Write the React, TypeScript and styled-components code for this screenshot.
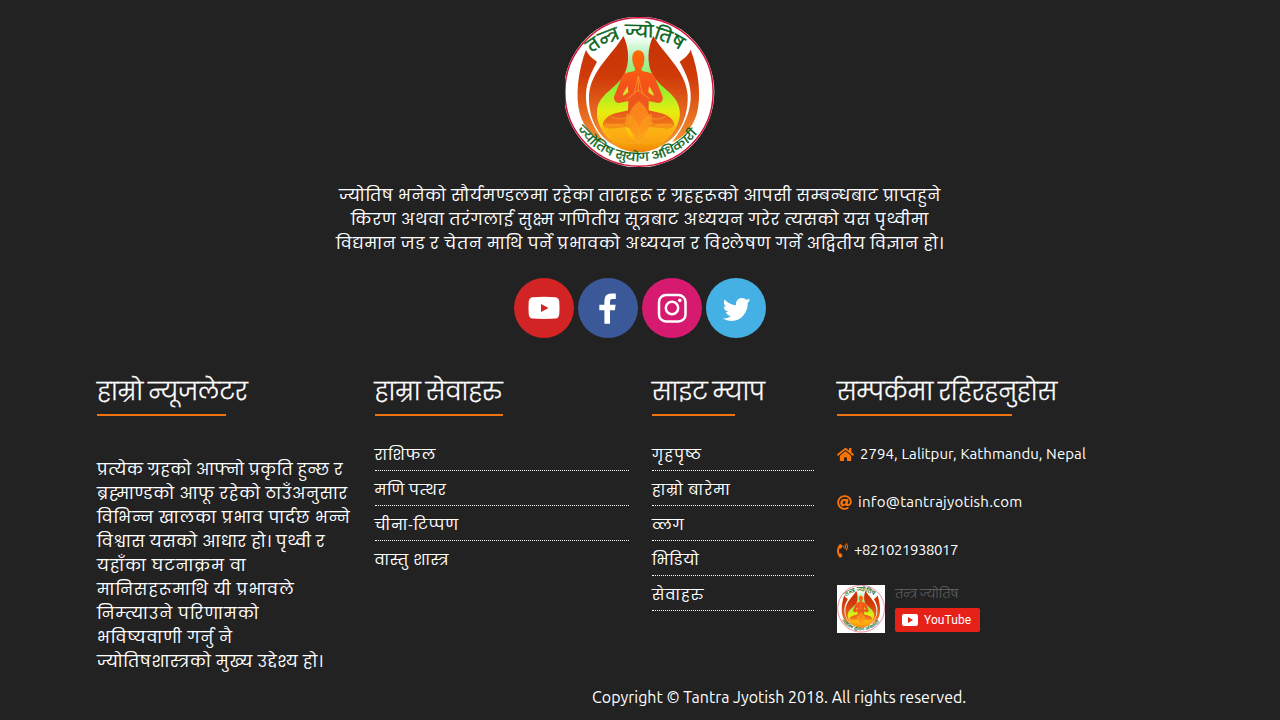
import React from "react";
import styled, { createGlobalStyle } from "styled-components";
import { FaHome, FaAt, FaPhoneVolume } from "react-icons/fa";

const GlobalStyle = createGlobalStyle`
  * { box-sizing: border-box; }
  body {
    margin: 0;
    background: #222;
    color: #fff;
    font-family: Ubuntu, Poppins, "Noto Sans", sans-serif;
    overflow: hidden;
  }
`;

const Footer = styled.footer`
  height: 720px;
  display: flex;
  flex-direction: column;
  align-items: center;
  padding-top: 17px;
  overflow: hidden;
`;

const Intro = styled.div`
  margin-top: 16px;
  display: flex;
  flex-direction: column;
  align-items: center;
`;

const Line = styled.span<{ $spacing: number }>`
  display: block;
  height: 24px;
  line-height: 24px;
  white-space: nowrap;
  font-size: 16px;
  letter-spacing: ${(p) => p.$spacing}px;
`;

const Socials = styled.div`
  display: flex;
  gap: 4px;
  margin-top: 23px;
`;

const Social = styled.a<{ $color: string }>`
  width: 60px;
  height: 60px;
  border-radius: 50%;
  background: ${(p) => p.$color};
  display: flex;
  align-items: center;
  justify-content: center;
  color: #fff;
`;

const Columns = styled.div`
  width: 1110px;
  height: 313px;
  margin-top: 34px;
  padding-left: 12px;
  display: grid;
  grid-template-columns: 277.5px 277.5px 185px 1fr;
`;

const Column = styled.section`
  padding-right: 23px;
  min-width: 0;
`;

const Heading = styled.h4<{ $bar: number }>`
  margin: 0;
  height: 44px;
  line-height: 40px;
  font-weight: 300;
  font-size: 24px;
  letter-spacing: -0.17px;
  white-space: nowrap;
  -webkit-text-stroke: 0.3px #fff;
  &::after {
    content: "";
    display: block;
    width: ${(p) => p.$bar}px;
    height: 2px;
    margin-top: 2px;
    background: #ee7410;
  }
`;

const About = styled.div`
  margin-top: 41px;
`;

const Links = styled.ul`
  list-style: none;
  margin: 20px 0 0;
  padding: 0;
`;

const LinkRow = styled.li<{ $plain?: boolean; $spacing: number }>`
  height: 35px;
  line-height: 38px;
  font-size: 15px;
  letter-spacing: ${(p) => p.$spacing}px;
  white-space: nowrap;
  border-bottom: ${(p) => (p.$plain ? "none" : "1px dotted #fff")};
`;

const Contact = styled.div<{ $spacing: number }>`
  height: 24px;
  margin-bottom: 24px;
  display: flex;
  align-items: center;
  gap: 6px;
  font-size: 15px;
  letter-spacing: ${(p) => p.$spacing}px;
  white-space: nowrap;
  svg { color: #f97306; flex: none; }
  span { margin-top: -2px; }
`;

const PhoneIcon = styled(FaPhoneVolume)`
  width: 11px;
`;

const Contacts = styled.div`
  margin-top: 26px;
`;

const Channel = styled.div`
  display: flex;
  gap: 10px;
  margin-top: -1px;
`;

const Avatar = styled.div`
  width: 48px;
  height: 48px;
  background: #fff;
`;

const ChannelName = styled.div`
  height: 23px;
  line-height: 18px;
  font-size: 12px;
  font-weight: 300;
  color: #666;
`;

const Subscribe = styled.button`
  display: flex;
  align-items: center;
  gap: 6px;
  width: 85px;
  height: 24px;
  padding: 0 7px;
  border: 0;
  border-radius: 2px;
  background: #e62117;
  color: #fff;
  font: 12px Roboto, sans-serif;
  letter-spacing: 0.1px;
`;

const Copyright = styled.div`
  width: 374px;
  margin-left: 278px;
  line-height: 24px;
  font-size: 16px;
  white-space: nowrap;
`;

function Petals() {
  return (
    <>
      <path fill="url(#flame)" d="M78 118C54 180 45 260 60 312C72 352 98 382 134 396C98 350 75 300 78 250C80 210 97 182 111 154C98 145 84 134 78 118Z" />
      <path fill="url(#flame)" d="M190 77C160 130 92 180 87 255C84 330 122 395 178 410C142 385 109 350 111 305C113 252 166 238 192 194C211 158 207 110 190 77Z" />
    </>
  );
}

function Emblem({ size, cropped }: { size: number; cropped?: boolean }) {
  return (
    <svg width={size} height={size} viewBox={cropped ? "15 20 450 450" : "8 20 456 456"}>
      <defs>
        <linearGradient id="flame" gradientUnits="userSpaceOnUse" x1="0" y1="80" x2="0" y2="410">
          <stop offset="0" stopColor="#c43205" />
          <stop offset="0.35" stopColor="#cf3a08" />
          <stop offset="0.7" stopColor="#e66a20" />
          <stop offset="1" stopColor="#f39a35" />
        </linearGradient>
        <linearGradient id="glow" gradientUnits="userSpaceOnUse" x1="0" y1="75" x2="0" y2="426">
          <stop offset="0" stopColor="#fff" />
          <stop offset="0.2" stopColor="#a5f0ae" />
          <stop offset="0.42" stopColor="#86ee32" />
          <stop offset="0.65" stopColor="#e5ee10" />
          <stop offset="0.84" stopColor="#ffc20a" />
          <stop offset="1" stopColor="#f08207" />
        </linearGradient>
        <linearGradient id="body" gradientUnits="userSpaceOnUse" x1="0" y1="120" x2="0" y2="390">
          <stop offset="0" stopColor="#ff6b05" />
          <stop offset="0.4" stopColor="#f4511c" />
          <stop offset="0.7" stopColor="#e85b1c" />
          <stop offset="1" stopColor="#f9a010" />
        </linearGradient>
        <path id="topArc" d="M94 129A222 222 0 0 1 372 129" />
        <path id="bottomArc" d="M48 352A226 226 0 0 0 424 352" />
      </defs>
      <circle cx="237" cy="245" r="226" fill="#fff" />
      <circle cx="237" cy="245" r="222.5" fill="none" stroke="#d0123a" strokeWidth="4.5" />
      <path fill="url(#glow)" d="M190 77C212 112 210 162 188 200C160 238 112 255 111 305C110 375 168 426 235 426C303 426 360 375 359 305C358 255 312 238 283 200C262 162 261 112 281 77Z" />
      <Petals />
      <g transform="translate(470 0) scale(-1 1)"><Petals /></g>
      <path fill="url(#body)" d="M235 120C222 120 215 133 217 149C218 162 222 168 225 173L225 181C213 187 192 183 187 198L162 259C161 270 168 278 177 278L205 272L204 300C180 306 150 309 136 327C121 345 130 352 150 355L202 350L235 375L268 350L322 355C342 352 350 345 335 327C320 309 290 306 266 300L266 272L294 278C304 278 310 270 308 259L283 198C278 183 257 187 245 181L245 173C249 168 252 162 253 149C255 133 248 120 235 120Z" />
      <path fill="#d9e02c" d="M189 250L203 226L205 246L190 257ZM281 250L267 226L265 246L280 257Z" />
      <path fill="none" stroke="#ffa52a" strokeWidth="2" d="M202 265L222 250C227 233 231 216 235 198C239 216 243 233 248 250L268 265M235 198V244M222 250L235 239L248 250M150 316C176 334 202 324 220 312M320 316C294 334 268 324 250 312M132 340C164 350 190 342 210 334M338 340C306 350 280 342 260 334" />
      <path fill="#ff8e1c" fillOpacity="0.8" d="M237 272C208 294 194 330 214 365L237 398L260 365C280 330 266 294 237 272Z" />
      <path fill="#f9a019" fillOpacity="0.55" stroke="#fbb033" strokeWidth="1.2" d="M237 398C220 350 180 329 125 349C147 390 184 402 237 398C290 402 327 390 349 349C294 329 254 350 237 398ZM237 398C190 378 195 341 201 310C232 332 245 360 237 398C274 378 279 341 273 310C242 332 229 360 237 398Z" />
      <g fill="#08651b" stroke="#08651b" fontFamily="Poppins, 'Noto Sans', sans-serif">
        <text fontSize="49" strokeWidth="1.4"><textPath href="#topArc" textLength="284" lengthAdjust="spacingAndGlyphs">तन्त्र ज्योतिष</textPath></text>
        <text fontSize="33" strokeWidth="1"><textPath href="#bottomArc" startOffset="8" textLength="415" lengthAdjust="spacingAndGlyphs">ज्योतिष सुयोग अधिकारी</textPath></text>
      </g>
    </svg>
  );
}

function YoutubeMark() {
  return (
    <svg width="32" height="24" viewBox="0 0 32 24" fill="#fff">
      <path fillRule="evenodd" d="M4.5 1.3Q16 .3 27.5 1.3Q31 1.8 31.3 6Q31.8 12 31.3 18Q31 22.2 27.5 22.6Q16 23.4 4.5 22.6Q1 22.2.7 18Q.2 12 .7 6Q1 1.8 4.5 1.3ZM13 8V16L20.5 12Z" />
    </svg>
  );
}

function InstagramMark() {
  return (
    <svg width="30" height="30" viewBox="0 0 30 30" fill="none" stroke="#fff" strokeWidth="2.5">
      <rect x="2" y="2" width="26.5" height="26.5" rx="7" />
      <circle cx="15" cy="15" r="6.2" />
      <circle cx="22.8" cy="7.4" r="1.8" fill="#fff" stroke="none" />
    </svg>
  );
}

function FacebookMark() {
  return (
    <svg width="18" height="32" viewBox="0 0 18 32" fill="#fff">
      <path d="M16.8 1.6V6.9H13.4Q11 6.9 11 9.2V12.8H16.6L15.9 18.3H11V31.8H5.4V18.3H.3V12.8H5.4V8.5Q5.4 1.4 12.4 1.4Z" />
    </svg>
  );
}

function TwitterMark() {
  return (
    <svg width="29" height="25" viewBox="0 -.5 29 25" fill="#fff">
      <path d="M28.3 3.4C27.6 4.5 26.7 5.4 25.7 6.2C26.2 15.5 19.5 24.4 9.6 24.4C6.5 24.4 3.4 23.5.8 21.8C3.8 22.2 6.8 21.3 9 19.4C6.5 19.3 4.5 17.7 3.8 15.4C4.7 15.6 5.5 15.6 6.3 15.3C3.6 14.7 1.8 12.5 1.8 9.7C2.6 10.1 3.4 10.4 4.3 10.4C1.8 8.6 1.1 5.4 2.6 2.9C5.4 6.3 9.6 8.5 14.2 8.7C13.4 5 16 1.4 19.9 1.4C21.5 1.4 23 2.1 24.1 3.2C25.3 3 26.5 2.5 27.5 1.9C27.1 3.2 26.3 4.1 25.1 4.3C26.2 4.2 27.3 3.9 28.3 3.4Z" />
    </svg>
  );
}

const aboutLines: [string, number][] = [
  ["प्रत्येक ग्रहको आफ्नो प्रकृति हुन्छ र", 0.67],
  ["ब्रह्माण्डको आफू रहेको ठाउँअनुसार", 0.93],
  ["विभिन्न खालका प्रभाव पार्दछ भन्ने", 1.13],
  ["विश्वास यसको आधार हो। पृथ्वी र", 0.78],
  ["यहाँका घटनाक्रम वा", 1.15],
  ["मानिसहरूमाथि यी प्रभावले", 1.25],
  ["निम्त्याउने परिणामको", 1.25],
  ["भविष्यवाणी गर्नु नै", 1.15],
  ["ज्योतिषशास्त्रको मुख्य उद्देश्य हो।", 0.88],
];

export default function App() {
  return (
    <Footer>
      <GlobalStyle />
      <Emblem size={150} cropped />
      <Intro>
        <Line $spacing={0.88}>ज्योतिष भनेको सौर्यमण्डलमा रहेका ताराहरू र ग्रहहरूको आपसी सम्बन्धबाट प्राप्तहुने</Line>
        <Line $spacing={0.9}>किरण अथवा तरंगलाई सुक्ष्म गणितीय सूत्रबाट अध्ययन गरेर त्यसको यस पृथ्वीमा</Line>
        <Line $spacing={0.95}>विद्यमान जड र चेतन माथि पर्ने प्रभावको अध्ययन र विश्लेषण गर्ने अद्वितीय विज्ञान हो।</Line>
      </Intro>
      <Socials>
        <Social $color="#d22424"><YoutubeMark /></Social>
        <Social $color="#3b5998"><FacebookMark /></Social>
        <Social $color="#d61a6f"><InstagramMark /></Social>
        <Social $color="#45b0e3"><TwitterMark /></Social>
      </Socials>
      <Columns>
        <Column>
          <Heading $bar={129}>हाम्रो न्यूजलेटर</Heading>
          <About>{aboutLines.map(([text, spacing]) => <Line key={text} $spacing={spacing}>{text}</Line>)}</About>
        </Column>
        <Column>
          <Heading $bar={128}>हाम्रा सेवाहरु</Heading>
          <Links>
            <LinkRow $spacing={1.1}>राशिफल</LinkRow>
            <LinkRow $spacing={0.7}>मणि पत्थर</LinkRow>
            <LinkRow $spacing={1}>चीना-टिप्पण</LinkRow>
            <LinkRow $spacing={0.8} $plain>वास्तु शास्त्र</LinkRow>
          </Links>
        </Column>
        <Column>
          <Heading $bar={83}>साइट म्याप</Heading>
          <Links>
            <LinkRow $spacing={1.1}>गृहपृष्ठ</LinkRow>
            <LinkRow $spacing={1.15}>हाम्रो बारेमा</LinkRow>
            <LinkRow $spacing={0.6}>व्लग</LinkRow>
            <LinkRow $spacing={0.9}>भिडियो</LinkRow>
            <LinkRow $spacing={1.05}>सेवाहरु</LinkRow>
          </Links>
        </Column>
        <Column>
          <Heading $bar={175}>सम्पर्कमा रहिरहनुहोस</Heading>
          <Contacts>
            <Contact $spacing={0.07}><FaHome size={17} /><span>2794, Lalitpur, Kathmandu, Nepal</span></Contact>
            <Contact $spacing={0.26}><FaAt size={15} /><span>info@tantrajyotish.com</span></Contact>
            <Contact $spacing={-0.46}><PhoneIcon size={15} /><span>+821021938017</span></Contact>
          </Contacts>
          <Channel>
            <Avatar><Emblem size={48} /></Avatar>
            <div>
              <ChannelName>तन्त्र ज्योतिष</ChannelName>
              <Subscribe>
                <svg width="16" height="12" viewBox="0 0 16 12"><path fill="#fff" fillRule="evenodd" d="M2 0H14Q16 0 16 2V10Q16 12 14 12H2Q0 12 0 10V2Q0 0 2 0ZM6 3V9L11 6Z" /></svg>
                YouTube
              </Subscribe>
            </div>
          </Channel>
        </Column>
      </Columns>
      <Copyright>Copyright © Tantra Jyotish 2018. All rights reserved.</Copyright>
    </Footer>
  );
}
